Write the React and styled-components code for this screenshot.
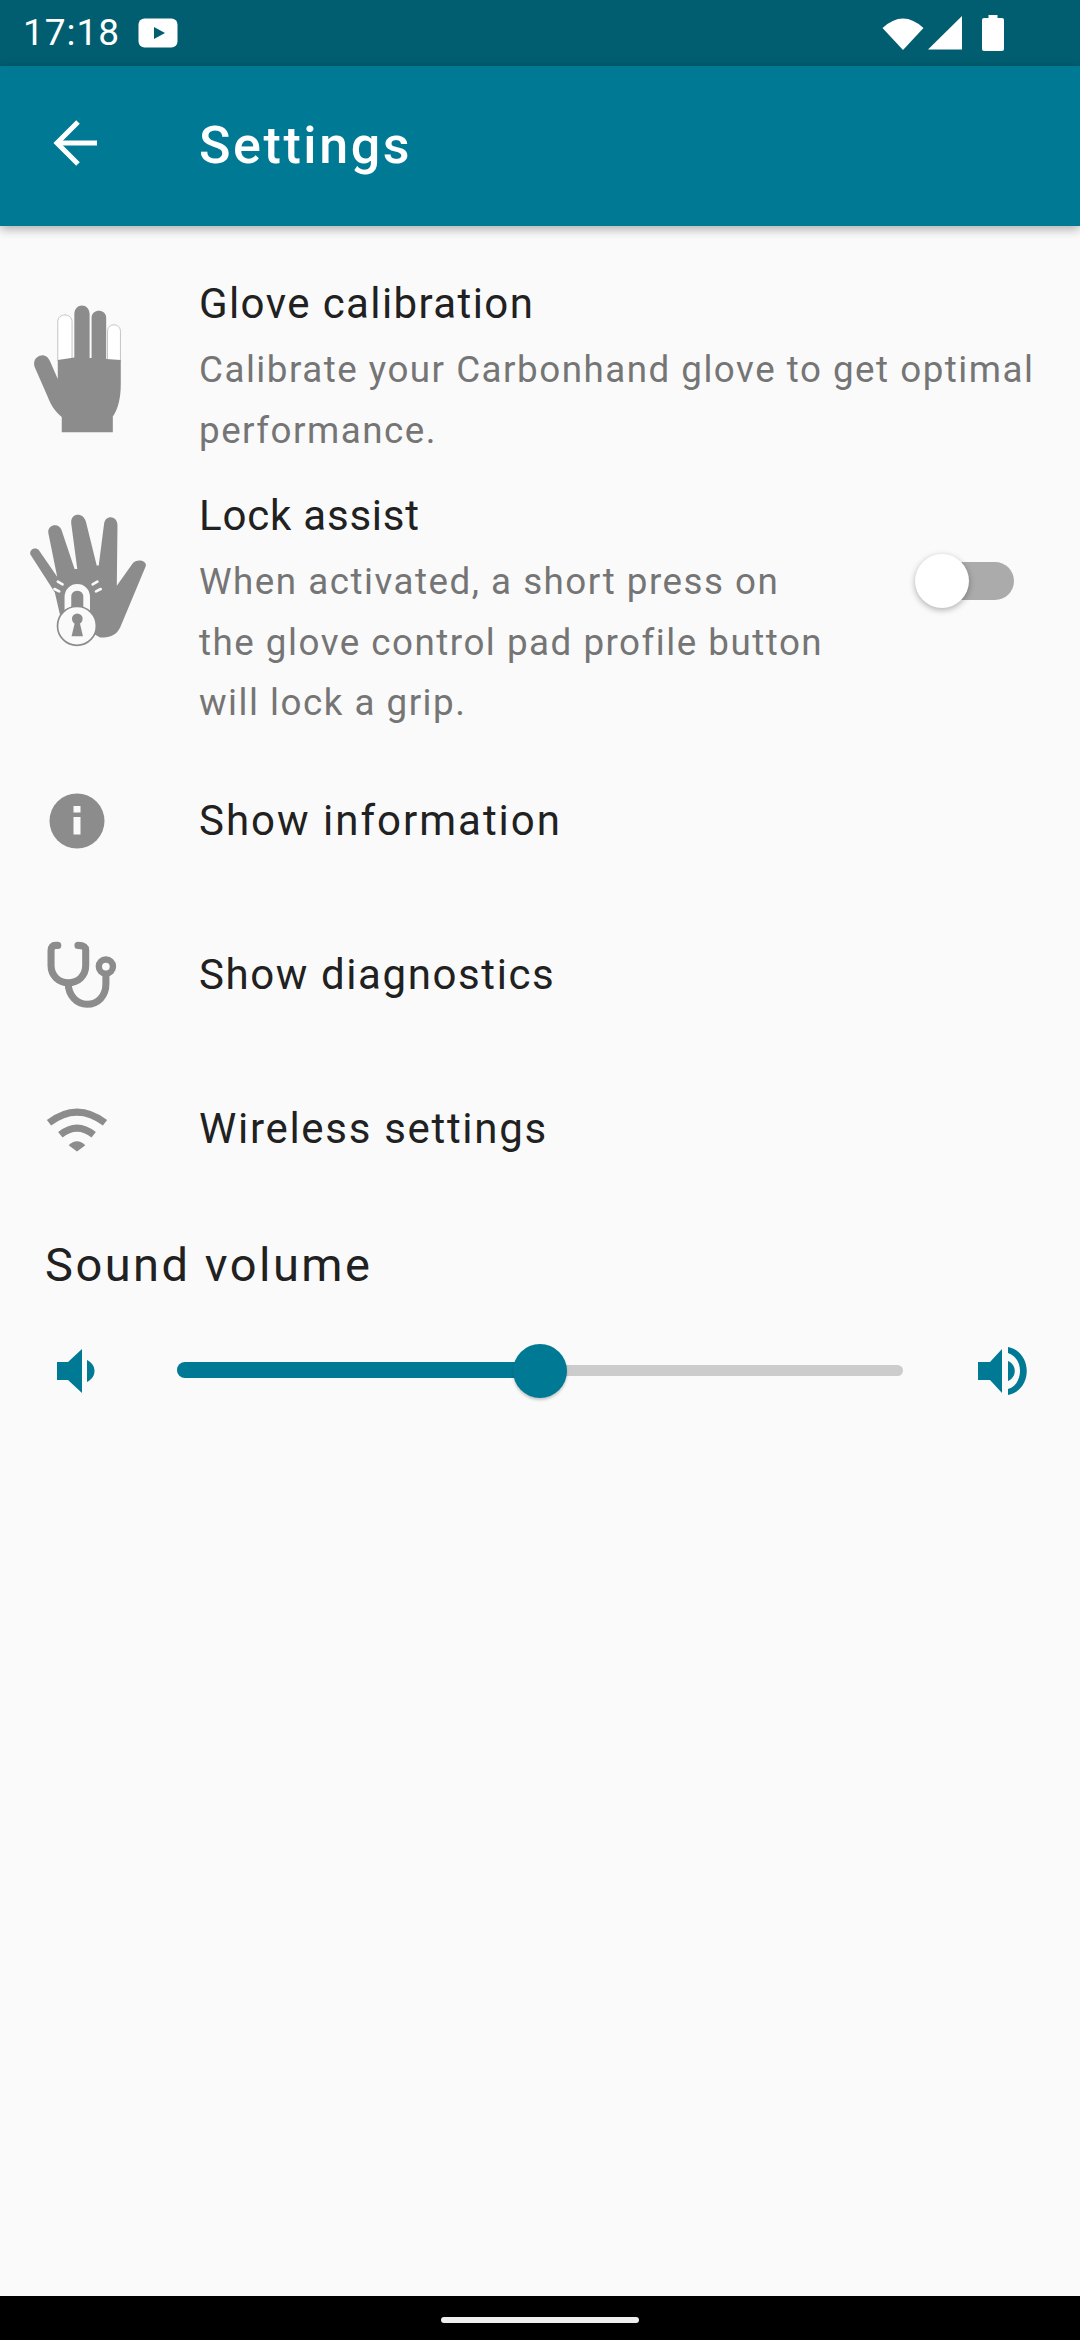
import React from 'react';
import styled, { createGlobalStyle } from 'styled-components';

const GlobalStyle = createGlobalStyle`
  html, body {
    margin: 0;
    padding: 0;
    background: #fafafa;
  }
  * {
    box-sizing: border-box;
  }
`;

const Page = styled.div`
  width: 1080px;
  height: 2340px;
  display: flex;
  flex-direction: column;
  background: #fafafa;
  font-family: Roboto, "Noto Sans", sans-serif;
  overflow: hidden;
`;

const StatusBar = styled.div`
  height: 66px;
  flex: none;
  display: flex;
  align-items: center;
  justify-content: space-between;
  padding: 0 76px 0 23px;
  background: #005e70;
  color: #fff;
`;

const StatusGroup = styled.div`
  display: flex;
  align-items: center;
  gap: ${(p) => p.$gap}px;
`;

const Clock = styled.span`
  font-size: 37px;
  line-height: 66px;
  letter-spacing: 1px;
`;

const AppBar = styled.header`
  position: relative;
  z-index: 1;
  height: 160px;
  flex: none;
  display: flex;
  align-items: center;
  background: #007a94;
  box-shadow: 0 3px 10px rgba(0, 0, 0, 0.32);
`;

const BackButton = styled.div`
  width: 199px;
  flex: none;
  display: flex;
  padding: 0 0 6px 53px;
`;

const Title = styled.h1`
  margin: 0;
  color: #fff;
  font-size: 52px;
  font-weight: 500;
  line-height: 60px;
  letter-spacing: 2.6px;
`;

const Content = styled.main`
  flex: 1;
  padding-top: 50px;
`;

const Row = styled.div`
  display: flex;
  margin-bottom: ${(p) => p.$after || 0}px;
`;

const NavRow = styled.div`
  height: 154px;
  display: flex;
  align-items: center;
`;

const IconCell = styled.div`
  width: 199px;
  flex: none;
  display: flex;
  justify-content: flex-start;
  padding-left: ${(p) => p.$left}px;
  padding-top: ${(p) => p.$top || 0}px;
`;

const RowBody = styled.div`
  flex: 1;
  min-width: 0;
`;

const RowTitle = styled.div`
  color: #212121;
  font-size: 42px;
  line-height: 56px;
  letter-spacing: ${(p) => p.$spacing}px;
`;

const Description = styled.p`
  margin: 8px 0 0;
  width: ${(p) => p.$width}px;
  color: #757575;
  font-size: 36.75px;
  line-height: 60.5px;
  letter-spacing: 1.5px;
`;

const ToggleCell = styled.div`
  width: 164px;
  flex: none;
  display: flex;
  padding-top: 74px;
`;

const SwitchTrack = styled.div`
  position: relative;
  width: 98px;
  height: 38px;
  border-radius: 19px;
  background: #ababab;
`;

const SwitchThumb = styled.div`
  position: absolute;
  left: -1px;
  top: -8px;
  width: 54px;
  height: 54px;
  border-radius: 50%;
  background: #fff;
  box-shadow: 0 2px 6px rgba(0, 0, 0, 0.3);
`;

const SectionLabel = styled.div`
  margin: 29px 0 0 45px;
  color: #212121;
  font-size: 47px;
  line-height: 60px;
  letter-spacing: 2.5px;
`;

const SliderRow = styled.div`
  height: 96px;
  margin-top: 28px;
  display: flex;
  align-items: center;
  padding: 0 52px 0 57px;
`;

const SliderTrack = styled.div`
  position: relative;
  flex: 1;
  height: 11px;
  margin: 0 75px 0 82px;
  border-radius: 6px;
  background: #cccccc;
`;

const SliderFill = styled.div`
  position: absolute;
  left: 0;
  top: -3px;
  height: 16px;
  border-radius: 8px 0 0 8px;
  background: #007a94;
`;

const SliderThumb = styled.div`
  position: absolute;
  top: 50%;
  width: 54px;
  height: 54px;
  margin: -27px 0 0 -27px;
  border-radius: 50%;
  background: #007a94;
  box-shadow: 0 2px 3px rgba(0, 0, 0, 0.22);
`;

const NavBar = styled.div`
  height: 44px;
  flex: none;
  display: flex;
  justify-content: center;
  padding-top: 21px;
  background: #000;
`;

const NavHandle = styled.div`
  width: 198px;
  height: 6px;
  border-radius: 3px;
  background: #eeeeee;
`;

const Glyph = styled.svg`
  display: block;
  flex: none;
`;

const GREY = '#8c8c8c';
const TEAL = '#007a94';

function PlayBadge() {
  return (
    <Glyph width="40" height="30" viewBox="0 0 40 30">
      <rect x="0.5" y="0.5" width="39" height="29" rx="6" fill="#fff" />
      <path d="M16 9 L27 15 L16 21 Z" fill="#005e70" />
    </Glyph>
  );
}

function WifiFull() {
  return (
    <Glyph width="42" height="34" viewBox="0 0 42 34">
      <path d="M0.5 12 Q21 -7 41.5 12 L21 34 Z" fill="#fff" />
    </Glyph>
  );
}

function Signal() {
  return (
    <Glyph width="34" height="34" viewBox="0 0 34 34">
      <path d="M0 33.5 L34 0 L34 33.5 Z" fill="#fff" />
    </Glyph>
  );
}

function Battery() {
  return (
    <Glyph width="22" height="36" viewBox="0 0 22 36">
      <path d="M6.5 0 H15.5 V3 H20 Q22 3 22 5 V34 Q22 36 20 36 H2 Q0 36 0 34 V5 Q0 3 2 3 H6.5 Z" fill="#fff" />
    </Glyph>
  );
}

function BackArrow() {
  return (
    <Glyph width="44" height="46" viewBox="0 0 44 46" fill="none" stroke="#fff" strokeWidth="5">
      <path d="M44 23 H5" />
      <path d="M25 2 L4 23 L25 44" />
    </Glyph>
  );
}

function GloveHand() {
  return (
    <Glyph width="89" height="128" viewBox="98 72 267 386">
      <path d="M172 240 V123 C172 95 215 95 215 123 V240 Z" fill="#fff" stroke="#a8a8a8" strokeWidth="2" />
      <path d="M322 240 V152 C322 125 361 125 361 152 V240 Z" fill="#fff" stroke="#a8a8a8" strokeWidth="2" />
      <path
        d="M102 258 C95 235 115 222 130 224 C140 226 146 234 150 245 L172 295 L172 238 L222 230 L222 100 C222 65 268 65 268 100 L268 232 L274 232 L274 110 C274 82 318 82 318 110 L318 235 L362 238 L362 310 C362 350 355 385 338 408 L338 456 L184 456 L184 410 C160 390 150 370 140 345 Z"
        fill={GREY}
      />
    </Glyph>
  );
}

function LockHand() {
  return (
    <Glyph width="118" height="134" viewBox="88 698 352 400">
      <path
        d="M92 822 C88 806 108 798 118 810 L172 888 L146 760 C140 730 180 725 186 752 L224 865 L232 865 L214 730 C210 695 252 695 258 725 L290 855 L296 855 L312 730 C316 702 352 705 352 735 L350 915 L396 850 C410 832 442 840 436 858 L360 1040 C350 1060 335 1070 300 1070 L180 1000 L165 935 Z"
        fill={GREY}
      />
      <g fill="none" stroke="#fafafa" strokeWidth="8" strokeLinecap="round">
        <path d="M174 903 L188 911" />
        <path d="M164 925 L178 932" />
        <path d="M278 911 L292 903" />
        <path d="M288 932 L302 925" />
      </g>
      <path d="M204 990 V950 C204 910 260 910 260 950 V990" fill="none" stroke="#fafafa" strokeWidth="20" />
      <circle cx="231" cy="1035" r="58" fill="#fafafa" stroke={GREY} strokeWidth="5" />
      <circle cx="232" cy="1014" r="16" fill={GREY} />
      <path d="M226 1020 H238 L249 1066 H215 Z" fill={GREY} />
    </Glyph>
  );
}

function InfoIcon() {
  return (
    <Glyph width="56" height="56" viewBox="0 0 56 56">
      <circle cx="28" cy="28" r="27.5" fill={GREY} />
      <rect x="24.5" y="13" width="7" height="6.5" fill="#fafafa" />
      <rect x="24.5" y="24" width="7" height="17.5" fill="#fafafa" />
    </Glyph>
  );
}

function StethoscopeIcon() {
  return (
    <Glyph width="70" height="68" viewBox="143 512 208 202" fill="none" stroke={GREY} strokeWidth="21" strokeLinecap="round">
      <path d="M175 525 H168 C160 525 155 530 155 540 V585 C155 615 178 636 206 636 C236 636 258 615 258 585 V540 C258 530 252 525 235 525" />
      <path d="M206 636 C206 675 232 700 262 700 C295 700 318 675 318 640 V612" strokeLinecap="butt" />
      <circle cx="318" cy="588" r="21" strokeWidth="19" />
    </Glyph>
  );
}

function WifiIcon() {
  return (
    <Glyph width="62" height="46" viewBox="138 1005 186 135" fill="none" stroke={GREY} strokeWidth="21">
      <path d="M147 1054 Q231 990 315 1054" />
      <path d="M181 1090 Q231 1050 281 1090" />
      <path d="M206 1121 L231 1140 L256 1121 Q231 1098 206 1121 Z" fill={GREY} stroke="none" />
    </Glyph>
  );
}

function SpeakerLow() {
  return (
    <Glyph width="38" height="44" viewBox="0 0 38 44">
      <path d="M0 13 H11 L25 0 V44 L11 31 H0 Z" fill={TEAL} />
      <path d="M30 11 C40 16 40 28 30 33 Z" fill={TEAL} />
    </Glyph>
  );
}

function SpeakerHigh() {
  return (
    <Glyph width="50" height="48" viewBox="0 0 50 48">
      <path d="M0 15 H12 L24 2 V46 L12 33 H0 Z" fill={TEAL} />
      <path d="M30 14 C39 18 39 30 30 34 Z" fill={TEAL} />
      <path d="M30 0 C55 5 55 43 30 48 V42 C46 37 46 11 30 6 Z" fill={TEAL} />
    </Glyph>
  );
}

const volume = 50;

const links = [
  { label: 'Show information', left: 49, spacing: 2, icon: <InfoIcon /> },
  { label: 'Show diagnostics', left: 47, spacing: 1.6, icon: <StethoscopeIcon /> },
  { label: 'Wireless settings', left: 46, spacing: 1.7, icon: <WifiIcon /> },
];

export default function App() {
  return (
    <Page>
      <GlobalStyle />
      <StatusBar>
        <StatusGroup $gap={18}>
          <Clock>17:18</Clock>
          <PlayBadge />
        </StatusGroup>
        <StatusGroup $gap={20}>
          <StatusGroup $gap={4}>
            <WifiFull />
            <Signal />
          </StatusGroup>
          <Battery />
        </StatusGroup>
      </StatusBar>
      <AppBar>
        <BackButton>
          <BackArrow />
        </BackButton>
        <Title>Settings</Title>
      </AppBar>
      <Content>
        <Row $after={27}>
          <IconCell $left={33} $top={29}>
            <GloveHand />
          </IconCell>
          <RowBody>
            <RowTitle $spacing={1.4}>Glove calibration</RowTitle>
            <Description $width={860}>
              Calibrate your Carbonhand glove to get optimal performance.
            </Description>
          </RowBody>
        </Row>
        <Row $after={10}>
          <IconCell $left={29} $top={25}>
            <LockHand />
          </IconCell>
          <RowBody>
            <RowTitle $spacing={0.8}>Lock assist</RowTitle>
            <Description $width={630}>
              When activated, a short press on the glove control pad profile button will lock a grip.
            </Description>
          </RowBody>
          <ToggleCell>
            <SwitchTrack>
              <SwitchThumb />
            </SwitchTrack>
          </ToggleCell>
        </Row>
        {links.map((link) => (
          <NavRow key={link.label}>
            <IconCell $left={link.left}>{link.icon}</IconCell>
            <RowTitle $spacing={link.spacing}>{link.label}</RowTitle>
          </NavRow>
        ))}
        <SectionLabel>Sound volume</SectionLabel>
        <SliderRow>
          <SpeakerLow />
          <SliderTrack>
            <SliderFill style={{ width: `${volume}%` }} />
            <SliderThumb style={{ left: `${volume}%` }} />
          </SliderTrack>
          <SpeakerHigh />
        </SliderRow>
      </Content>
      <NavBar>
        <NavHandle />
      </NavBar>
    </Page>
  );
}
